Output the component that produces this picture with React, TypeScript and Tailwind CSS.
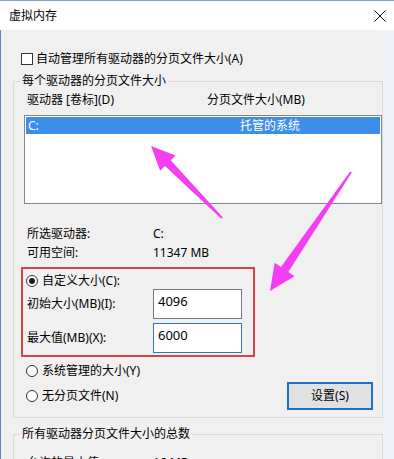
import React from "react";

function Radio({ checked }: { checked?: boolean }) {
  return (
    <span className="w-[12px] h-[12px] rounded-full border border-[#333333] bg-white flex items-center justify-center shrink-0">
      {checked && <span className="w-[6px] h-[6px] rounded-full bg-[#1a1a1a]" />}
    </span>
  );
}

function Arrows() {
  return (
    <svg
      className="absolute left-0 top-0 pointer-events-none"
      width="394"
      height="459"
      viewBox="0 0 394 459"
    >
      <polygon
        points="151,146 175.7,155.4 170.7,160.3 222.7,217.3 221.3,218.7 165,165.9 160.1,170.8"
        fill="#f43ef2"
      />
      <polygon
        points="270,291 294.5,276.3 288.3,272 351.8,172.6 350.2,171.4 280.9,267 274.7,262.8"
        fill="#f43ef2"
      />
    </svg>
  );
}

export default function App() {
  return (
    <div className="relative w-[394px] h-[459px] overflow-hidden bg-[#f0f0f0] text-[12px] leading-[16px] text-black font-['Noto_Sans','Noto_Sans_CJK_SC',sans-serif]">
      {/* title bar */}
      <div className="h-[30px] bg-white flex items-center justify-between pl-[9px] pr-[8px] border-t border-[#7ea6dc]">
        <span>虚拟内存</span>
        <svg width="12" height="12" viewBox="0 0 12 12">
          <path d="M0.5 0.5 L11.5 11.5 M11.5 0.5 L0.5 11.5" stroke="#111" strokeWidth="1" />
        </svg>
      </div>

      <div className="flex h-[429px]">
        <div className="w-[383px] border-l border-[#4f8bd3] pl-[12px] pt-[21px]">
          <label className="flex items-center gap-[3px] ml-[8px] h-[16px]">
            <span className="w-[12px] h-[12px] border border-[#333333] bg-white shrink-0" />
            <span>自动管理所有驱动器的分页文件大小(A)</span>
          </label>

          <fieldset className="mt-[6px] w-[370px] border border-[#dadada] pl-[6px] pt-[3px] pb-[7px]">
            <legend className="px-[2px]">每个驱动器的分页文件大小</legend>

            <div className="flex pl-[7px] h-[16px]">
              <span className="w-[180px]">驱动器 [卷标](D)</span>
              <span>分页文件大小(MB)</span>
            </div>

            <div className="mt-[7px] ml-[4px] h-[89px] border border-[#828790] bg-white p-[1px]">
              <div className="flex items-center h-[17px] bg-[#3c8ee8] text-white pl-[2px]">
                <span className="w-[212px]">C:</span>
                <span>托管的系统</span>
              </div>
            </div>

            <div className="flex pl-[7px] mt-[22px] h-[16px]">
              <span className="w-[126px]">所选驱动器:</span>
              <span>C:</span>
            </div>
            <div className="flex pl-[7px] mt-[3px] h-[16px]">
              <span className="w-[126px]">可用空间:</span>
              <span>11347 MB</span>
            </div>

            <div className="mt-[6px] ml-[1px] w-[234px] border-2 border-[#d8434a] pl-[4px] pb-[2px]">
              <div className="flex items-center gap-[4px] mt-[4px] h-[16px] -ml-[1px]">
                <Radio checked />
                <span>自定义大小(C):</span>
              </div>
              <div className="flex items-center h-[30px]">
                <span className="w-[126px]">初始大小(MB)(I):</span>
                <div className="w-[89px] h-[30px] border border-[#7a7a7a] bg-white pl-[4px] pt-[3px] text-[13px]">
                  4096
                </div>
              </div>
              <div className="flex items-center h-[30px] mt-[4px]">
                <span className="w-[126px]">最大值(MB)(X):</span>
                <div className="w-[89px] h-[30px] border border-[#2b79b5] bg-white pl-[4px] pt-[3px] text-[13px]">
                  6000
                </div>
              </div>
            </div>

            <div className="flex items-center gap-[4px] mt-[6px] h-[16px] pl-[6px]">
              <Radio />
              <span>系统管理的大小(Y)</span>
            </div>
            <div className="flex items-center justify-between mt-[3px] h-[28px]">
              <div className="flex items-center gap-[4px] pl-[6px]">
                <Radio />
                <span>无分页文件(N)</span>
              </div>
              <button className="w-[86px] h-[28px] mr-[9px] bg-[#e1e1e1] border-2 border-[#1a72c9] flex items-center justify-center">
                设置(S)
              </button>
            </div>
          </fieldset>

          <fieldset className="mt-[8px] w-[370px] border border-[#dadada] pl-[6px] pt-[13px] pb-[7px]">
            <legend className="px-[2px]">所有驱动器分页文件大小的总数</legend>
            <div className="flex pl-[7px] h-[16px]">
              <span className="w-[126px]">允许的最小值:</span>
              <span>16 MB</span>
            </div>
          </fieldset>
        </div>
        <div className="flex-1 bg-[#eef1f5]" />
      </div>

      <Arrows />
    </div>
  );
}
